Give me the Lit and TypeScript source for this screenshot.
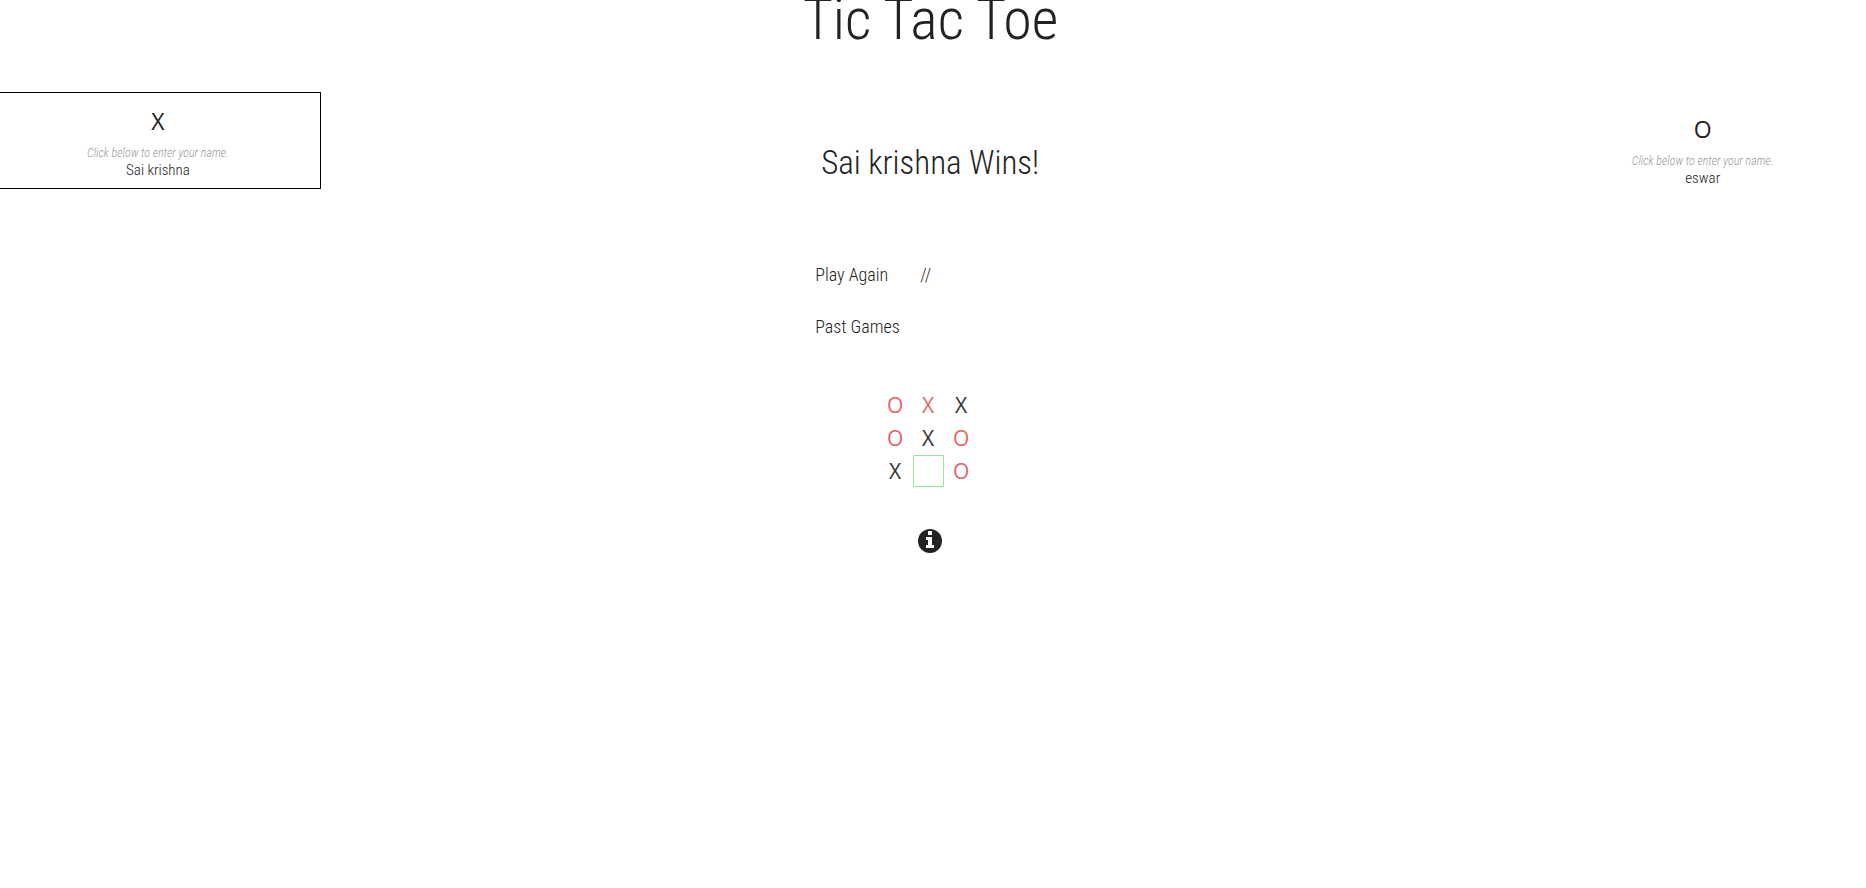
import { LitElement, html, css } from "lit";
import { customElement, property, state } from "lit/decorators.js";
import { classMap } from "lit/directives/class-map.js";

type Mark = "X" | "O" | "";

@customElement("player-card")
class PlayerCard extends LitElement {
  @property() mark: Mark = "X";
  @property() name = "";

  static styles = css`
    :host {
      display: flex;
      flex-direction: column;
      align-items: center;
      box-sizing: border-box;
    }
    .mark {
      font: 400 23px/32px "Open Sans", sans-serif;
    }
    .hint {
      margin-top: 8px;
      font-style: italic;
      font-size: 12px;
      line-height: 16px;
      color: #999;
    }
    .name {
      box-sizing: border-box;
      width: 160px;
      height: 18px;
      padding: 0;
      border: 0;
      outline: 0;
      background: transparent;
      color: inherit;
      font: inherit;
      font-size: 15px;
      line-height: 18px;
      text-align: center;
    }
  `;

  render() {
    return html`
      <div class="mark">${this.mark}</div>
      <label class="hint" for="name">Click below to enter your name.</label>
      <input class="name" id="name" type="text" .value=${this.name} />
    `;
  }
}

@customElement("game-board")
class GameBoard extends LitElement {
  @state() cells: Mark[] = ["O", "X", "X", "O", "X", "O", "X", "", "O"];
  private winning = [2, 4, 6];

  static styles = css`
    .board {
      display: grid;
      grid-template-columns: repeat(3, 31px);
      grid-auto-rows: 32px;
      gap: 1px 2px;
      padding-right: 4px;
    }
    .cell {
      padding: 0;
      border: 1px solid transparent;
      border-radius: 1px;
      background: transparent;
      color: #e06666;
      font: 400 21px/28px "Open Sans", sans-serif;
    }
    .win {
      color: #333;
    }
    .open {
      border-color: #98e698;
    }
  `;

  render() {
    return html`<div class="board">
      ${this.cells.map(
        (mark, i) => html`<button
          class=${classMap({ cell: true, win: this.winning.includes(i), open: mark === "" })}
          aria-label=${`Square ${i + 1}`}
        >${mark}</button>`
      )}
    </div>`;
  }
}

@customElement("app-root")
class AppRoot extends LitElement {
  static styles = css`
    :host {
      display: block;
      min-height: 100vh;
      overflow: hidden;
      background: #fff;
      color: #222;
      font-family: "Roboto Condensed", "Roboto", sans-serif;
      font-weight: 300;
    }
    .title {
      margin: -13px 0 0;
      padding-right: 5px;
      font-size: 58px;
      line-height: 64px;
      font-weight: 300;
      text-align: center;
    }
    .row {
      display: grid;
      grid-template-columns: 17.2% 1fr 17.5%;
      align-items: start;
      margin-top: 41px;
    }
    .active {
      margin-left: -5px;
      padding: 12px 0 9px;
      border: 1px solid #000;
    }
    .waiting {
      padding-top: 21px;
    }
    .center {
      display: flex;
      flex-direction: column;
      align-items: center;
    }
    .status {
      margin: 51px 0 0;
      font-size: 33px;
      line-height: 40px;
      font-weight: 300;
    }
    .menu {
      display: flex;
      flex-wrap: wrap;
      gap: 28px 32px;
      width: 230px;
      margin-top: 80px;
      font-size: 18px;
      line-height: 24px;
    }
    .link {
      padding: 0;
      border: 0;
      background: none;
      color: inherit;
      font: inherit;
    }
    .link.past {
      flex-basis: 100%;
      text-align: left;
    }
    game-board {
      margin-top: 50px;
    }
    .info {
      margin-top: 42px;
      padding: 0;
      border: 0;
      background: none;
      color: inherit;
      line-height: 0;
    }
  `;

  render() {
    return html`
      <h1 class="title">Tic Tac Toe</h1>
      <main class="row">
        <player-card class="active" mark="X" name="Sai krishna"></player-card>
        <section class="center">
          <h2 class="status">Sai krishna Wins!</h2>
          <nav class="menu">
            <button class="link">Play Again</button>
            <span>//</span>
            <button class="link past">Past Games</button>
          </nav>
          <game-board></game-board>
          <button class="info" aria-label="Information">
            <svg width="24" height="24" viewBox="0 0 24 24">
              <circle cx="12" cy="12" r="12" fill="currentColor" />
              <path fill="#fff" d="M10 2h4v4h-4zM8 8h6v8h2v3H8v-3h2v-5H8z" />
            </svg>
          </button>
        </section>
        <player-card class="waiting" mark="O" name="eswar"></player-card>
      </main>
    `;
  }
}
